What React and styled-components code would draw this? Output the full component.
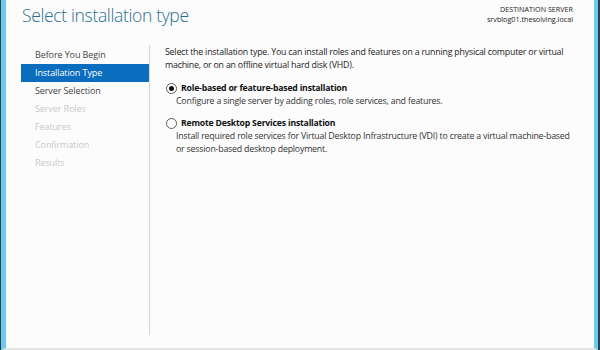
import React from "react";
import styled, { createGlobalStyle } from "styled-components";

const GlobalStyle = createGlobalStyle`
  html, body { margin: 0; padding: 0; background: #fcfcfc; }
  body { font-family: "Open Sans", "Noto Sans", sans-serif; }
`;

const steps = [
  { label: "Before You Begin", state: "done" },
  { label: "Installation Type", state: "active" },
  { label: "Server Selection", state: "done" },
  { label: "Server Roles", state: "off" },
  { label: "Features", state: "off" },
  { label: "Confirmation", state: "off" },
  { label: "Results", state: "off" },
];

const options = [
  {
    title: "Role-based or feature-based installation",
    text: ["Configure a single server by adding roles, role services, and features."],
    checked: true,
  },
  {
    title: "Remote Desktop Services installation",
    text: [
      "Install required role services for Virtual Desktop Infrastructure (VDI) to create a virtual machine-based",
      "or session-based desktop deployment.",
    ],
    checked: false,
  },
];

const App = () => {
  return (
    <Frame>
      <GlobalStyle />
      <Window>
        <Header>
          <Title>Select installation type</Title>
          <Dest>
            <span>DESTINATION SERVER</span>
            <span>srvblog01.thesolving.local</span>
          </Dest>
        </Header>
        <Body>
          <Sidebar>
            {steps.map((s) => (
              <Step key={s.label} state={s.state}>
                {s.label}
              </Step>
            ))}
          </Sidebar>
          <Content>
            <Intro>
              <div>Select the installation type. You can install roles and features on a running physical computer or virtual</div>
              <div>machine, or on an offline virtual hard disk (VHD).</div>
            </Intro>
            {options.map((o) => (
              <Option key={o.title}>
                <OptionHead>
                  <Radio checked={o.checked} />
                  <OptionTitle>{o.title}</OptionTitle>
                </OptionHead>
                <OptionText>
                  {o.text.map((t) => (
                    <div key={t}>{t}</div>
                  ))}
                </OptionText>
              </Option>
            ))}
          </Content>
        </Body>
      </Window>
    </Frame>
  );
};

const Frame = styled.div`
  width: 600px;
  height: 350px;
  box-sizing: border-box;
  background: #2e3f4c;
  padding: 0 2px 0 1px;
  display: flex;
`;

const Window = styled.div`
  flex: 1;
  background: #fcfcfc;
  border-left: 5px solid #6ccbec;
  border-right: 4px solid #6ccbec;
  border-bottom: 2px solid #e3e3e3;
  display: flex;
  flex-direction: column;
`;

const Header = styled.div`
  display: flex;
  justify-content: space-between;
  align-items: flex-start;
  padding: 0 21px 0 16px;
  height: 45px;
`;

const Title = styled.h1`
  margin: 0;
  font-family: "Open Sans", sans-serif;
  font-weight: 300;
  font-size: 17.5px;
  line-height: 31px;
  color: #2b6f8e;
  letter-spacing: -0.35px;
  white-space: nowrap;
`;

const Dest = styled.div`
  display: flex;
  flex-direction: column;
  align-items: flex-end;
  padding-top: 4px;
  font-size: 7.2px;
  line-height: 10px;
  color: #222;
  white-space: nowrap;
`;

const Body = styled.div`
  flex: 1;
  display: flex;
  padding-bottom: 13px;
`;

const Sidebar = styled.div`
  width: 128px;
  margin-left: 15px;
  border-right: 1px solid #d4d4d4;
  padding-top: 1px;
`;

const stepColor = {
  done: "#444",
  active: "#fff",
  off: "#c9c9c9",
};

const Step = styled.div`
  height: 18px;
  line-height: 18px;
  padding-left: 14px;
  font-size: 9px;
  letter-spacing: -0.1px;
  white-space: nowrap;
  color: ${({ state }) => stepColor[state]};
  background: ${({ state }) => (state === "active" ? "#0a6dbd" : "transparent")};
`;

const Content = styled.div`
  flex: 1;
  padding-left: 15px;
  padding-top: 1px;
  font-size: 8.8px;
  letter-spacing: -0.2px;
  color: #222;
  white-space: nowrap;
`;

const Intro = styled.div`
  margin: 0 0 9px;
  line-height: 13px;
`;

const Option = styled.div`
  margin-bottom: 8px;
`;

const OptionHead = styled.div`
  display: flex;
  align-items: center;
  gap: 4px;
  height: 14px;
`;

const Radio = styled.span`
  width: 9px;
  height: 9px;
  margin-left: 1px;
  border-radius: 50%;
  border: 1px solid #5a5a5a;
  background: #fff;
  display: flex;
  align-items: center;
  justify-content: center;

  &::after {
    content: "";
    width: 5px;
    height: 5px;
    border-radius: 50%;
    background: ${({ checked }) => (checked ? "#111" : "transparent")};
  }
`;

const OptionTitle = styled.span`
  font-weight: 700;
  font-size: 8.7px;
  letter-spacing: -0.2px;
  color: #111;
`;

const OptionText = styled.div`
  padding-left: 11px;
  line-height: 13px;
  color: #333;
`;

export default App;
